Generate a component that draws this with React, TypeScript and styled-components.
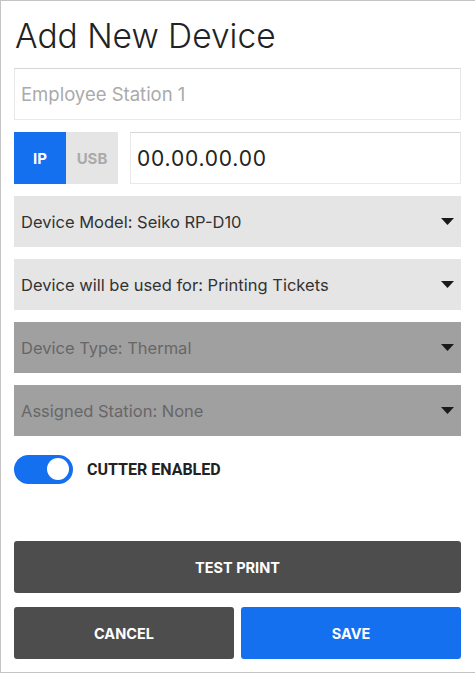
import React from "react";
import styled, { createGlobalStyle } from "styled-components";

const Global = createGlobalStyle`
  html, body { margin: 0; padding: 0; background: #fff; }
  * { box-sizing: border-box; }
`;

const Frame = styled.div`
  width: 100%;
  height: 673px;
  border: 1px solid #c4c4c4;
  border-right: none;
  padding: 14px 0 0 13px;
  font-family: "Inter", "Noto Sans", sans-serif;
  overflow: hidden;
`;

const Column = styled.div`
  width: 447px;
  display: flex;
  flex-direction: column;
`;

const Title = styled.h1`
  margin: 0 0 0 1px;
  font-size: 33.5px;
  font-weight: 300;
  color: #222;
  line-height: 42px;
  height: 53px;
`;

const TextInput = styled.input<{ $size?: number; $spacing?: number }>`
  width: 100%;
  height: 52px;
  border: 1px solid #e8e8e8;
  border-top-color: #d6d6d6;
  padding: 0 6px;
  font-family: inherit;
  font-size: ${(p) => p.$size ?? 18.5}px;
  letter-spacing: ${(p) => p.$spacing ?? 0}px;
  color: #222;
  outline: none;
  &::placeholder { color: #aaa; }
`;

const Row = styled.div`
  display: flex;
  gap: 12px;
  margin-top: 12px;
`;

const Segmented = styled.div`
  display: flex;
  flex: none;
`;

const Segment = styled.button<{ $active?: boolean }>`
  width: 52px;
  height: 52px;
  border: none;
  margin: 0;
  padding: 0;
  background: ${(p) => (p.$active ? "#1570ef" : "#e5e5e5")};
  color: ${(p) => (p.$active ? "#fff" : "#aaa")};
  font-family: inherit;
  font-weight: 700;
  font-size: 15px;
`;

const Select = styled.div<{ $disabled?: boolean }>`
  height: 51px;
  margin-top: 12px;
  background: ${(p) => (p.$disabled ? "#a0a0a0" : "#e5e5e5")};
  color: ${(p) => (p.$disabled ? "#676767" : "#333")};
  display: flex;
  align-items: center;
  justify-content: space-between;
  padding: 0 7px 0 7px;
  font-size: 16.5px;
`;

const Caret = styled.svg`
  width: 13px;
  height: 7px;
  fill: #1a1a1a;
`;

const ToggleRow = styled.div`
  display: flex;
  align-items: center;
  gap: 14px;
  margin-top: 18px;
  height: 30px;
`;

const Toggle = styled.div`
  width: 59px;
  height: 29px;
  border-radius: 15px;
  background: #1570ef;
  display: flex;
  align-items: center;
  justify-content: flex-end;
  padding-right: 4px;
`;

const Knob = styled.div`
  width: 22px;
  height: 22px;
  border-radius: 50%;
  background: #fff;
`;

const ToggleLabel = styled.span`
  font-family: "Roboto", sans-serif;
  font-weight: 700;
  font-size: 16px;
  color: #222;
`;

const ActionButton = styled.button<{ $primary?: boolean }>`
  flex: 1;
  height: 52px;
  border: none;
  border-radius: 3px;
  background: ${(p) => (p.$primary ? "#1570ef" : "#4d4d4d")};
  color: #fff;
  font-family: inherit;
  font-weight: 700;
  font-size: 14.5px;
`;

const ActionRow = styled.div<{ $top: number }>`
  display: flex;
  gap: 7px;
  margin-top: ${(p) => p.$top}px;
`;

const ArrowDown = () => (
  <Caret viewBox="0 0 13 7">
    <path d="M0 0 H13 L6.5 7 Z" />
  </Caret>
);

export default function App() {
  return (
    <>
      <Global />
      <Frame>
        <Column>
          <Title>Add New Device</Title>
          <TextInput placeholder="Employee Station 1" />
          <Row>
            <Segmented>
              <Segment $active>IP</Segment>
              <Segment>USB</Segment>
            </Segmented>
            <TextInput $size={21} $spacing={0.8} defaultValue="00.00.00.00" />
          </Row>
          <Select>
            <span>Device Model: Seiko RP-D10</span>
            <ArrowDown />
          </Select>
          <Select>
            <span>Device will be used for: Printing Tickets</span>
            <ArrowDown />
          </Select>
          <Select $disabled>
            <span>Device Type: Thermal</span>
            <ArrowDown />
          </Select>
          <Select $disabled>
            <span>Assigned Station: None</span>
            <ArrowDown />
          </Select>
          <ToggleRow>
            <Toggle>
              <Knob />
            </Toggle>
            <ToggleLabel>CUTTER ENABLED</ToggleLabel>
          </ToggleRow>
          <ActionRow $top={57}>
            <ActionButton>TEST PRINT</ActionButton>
          </ActionRow>
          <ActionRow $top={14}>
            <ActionButton>CANCEL</ActionButton>
            <ActionButton $primary>SAVE</ActionButton>
          </ActionRow>
        </Column>
      </Frame>
    </>
  );
}
